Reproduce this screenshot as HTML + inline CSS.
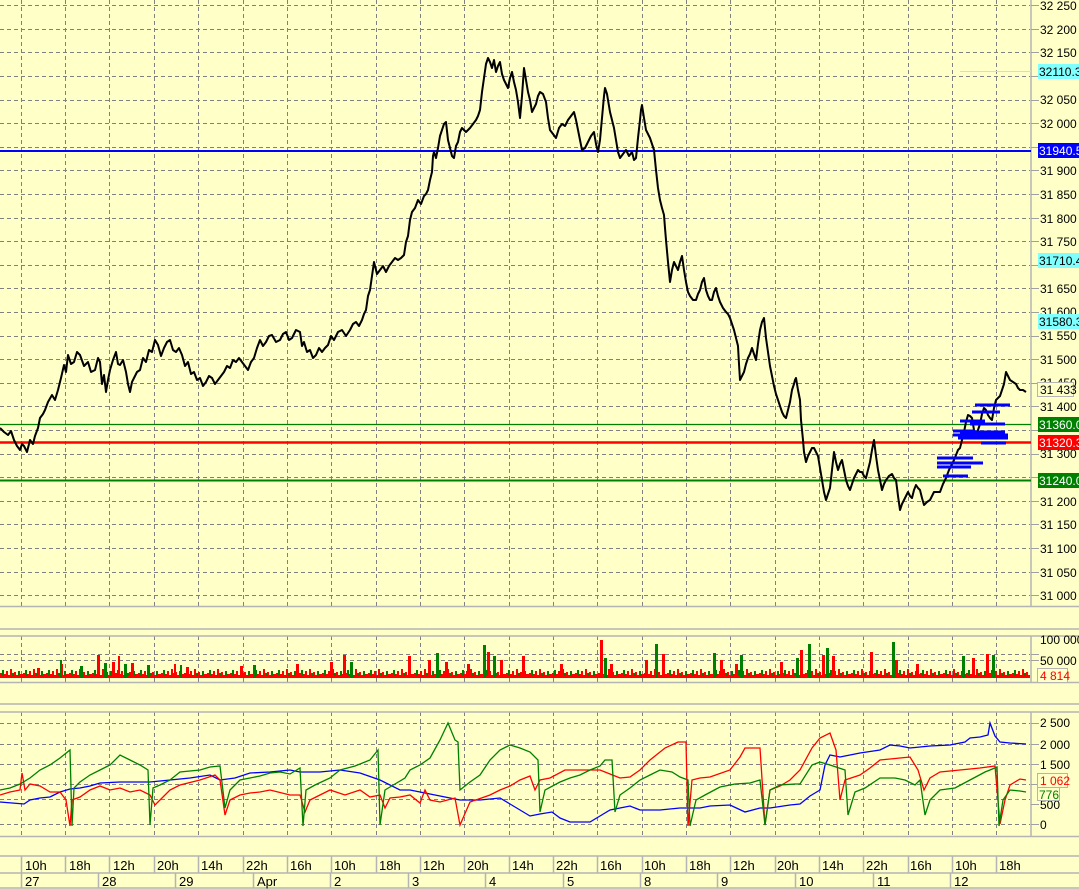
<!DOCTYPE html>
<html><head><meta charset="utf-8"><style>
html,body{margin:0;padding:0;background:#ffffc8;}
svg{display:block;font-family:"Liberation Sans",sans-serif;}
</style></head><body>
<svg width="1079" height="889" viewBox="0 0 1079 889" xmlns="http://www.w3.org/2000/svg">
<defs>
<pattern id="vp" x="0" y="660" width="23" height="18" patternUnits="userSpaceOnUse">
<rect x="0" y="13" width="2" height="5" fill="#f00"/><rect x="2" y="10" width="2" height="8" fill="#008000"/><rect x="4" y="14" width="2" height="4" fill="#f00"/><rect x="6" y="11" width="2" height="7" fill="#f00"/><rect x="8" y="15" width="2" height="3" fill="#008000"/><rect x="10" y="9" width="2" height="9" fill="#f00"/><rect x="12" y="13" width="2" height="5" fill="#008000"/><rect x="14" y="12" width="2" height="6" fill="#f00"/><rect x="16" y="15" width="2" height="3" fill="#f00"/><rect x="18" y="11" width="2" height="7" fill="#008000"/><rect x="20" y="14" width="3" height="4" fill="#f00"/>
</pattern>
</defs>
<rect width="1079" height="889" fill="#ffffc8"/>
<!-- vertical grid -->
<g stroke="#808080" stroke-dasharray="4,3" stroke-width="1">
<path d="M21.5 0V606M65.5 0V606M109.5 0V606M154.5 0V606M198.5 0V606M243.5 0V606M287.5 0V606M331.5 0V606M376.5 0V606M420.5 0V606M464.5 0V606M509.5 0V606M553.5 0V606M597.5 0V606M642.5 0V606M686.5 0V606M730.5 0V606M775.5 0V606M819.5 0V606M863.5 0V606M908.5 0V606M952.5 0V606M996.5 0V606"/>
<path d="M21.5 636V682M65.5 636V682M109.5 636V682M154.5 636V682M198.5 636V682M243.5 636V682M287.5 636V682M331.5 636V682M376.5 636V682M420.5 636V682M464.5 636V682M509.5 636V682M553.5 636V682M597.5 636V682M642.5 636V682M686.5 636V682M730.5 636V682M775.5 636V682M819.5 636V682M863.5 636V682M908.5 636V682M952.5 636V682M996.5 636V682"/>
<path d="M21.5 712V836M65.5 712V836M109.5 712V836M154.5 712V836M198.5 712V836M243.5 712V836M287.5 712V836M331.5 712V836M376.5 712V836M420.5 712V836M464.5 712V836M509.5 712V836M553.5 712V836M597.5 712V836M642.5 712V836M686.5 712V836M730.5 712V836M775.5 712V836M819.5 712V836M863.5 712V836M908.5 712V836M952.5 712V836M996.5 712V836"/>
<path d="M0 5.5H1030M0 29.5H1030M0 52.5H1030M0 76.5H1030M0 100.5H1030M0 123.5H1030M0 147.5H1030M0 170.5H1030M0 194.5H1030M0 218.5H1030M0 241.5H1030M0 265.5H1030M0 288.5H1030M0 312.5H1030M0 336.5H1030M0 359.5H1030M0 383.5H1030M0 406.5H1030M0 430.5H1030M0 454.5H1030M0 477.5H1030M0 501.5H1030M0 524.5H1030M0 548.5H1030M0 572.5H1030M0 595.5H1030"/>
<path d="M0 654.5H1030M0 660.5H1030"/>
<path d="M0 723.5H1030M0 744.5H1030M0 764.5H1030M0 784.5H1030M0 799.5H1030M0 824.5H1030"/>
</g>
<!-- panel separators -->
<g stroke="#b4b4b4" stroke-width="1.5">
<path d="M0 606.5H1079M0 629H1079M0 636H1079M0 682.5H1079M0 704H1079M0 712H1079M0 836.5H1079"/>
<path d="M1031 0V606M1031 636V682M1031 712V836"/>
</g>
<g stroke="#a0a0a0" stroke-width="1">
<path d="M1031 5.5h8M1031 29.5h8M1031 52.5h8M1031 76.5h8M1031 100.5h8M1031 123.5h8M1031 147.5h8M1031 170.5h8M1031 194.5h8M1031 218.5h8M1031 241.5h8M1031 265.5h8M1031 288.5h8M1031 312.5h8M1031 336.5h8M1031 359.5h8M1031 383.5h8M1031 406.5h8M1031 430.5h8M1031 454.5h8M1031 477.5h8M1031 501.5h8M1031 524.5h8M1031 548.5h8M1031 572.5h8M1031 595.5h8"/>
<path d="M1031 654.5h8M1031 660.5h8M1031 723.5h8M1031 744.5h8M1031 764.5h8M1031 784.5h8M1031 804.5h8M1031 824.5h8"/>
</g>
<!-- level lines -->
<path d="M960 71.5H1031" stroke="#80ffff" stroke-width="1"/>
<path d="M0 151H1031" stroke="#0000ff" stroke-width="2"/>
<path d="M0 424.5H1031" stroke="#008000" stroke-width="1.2"/>
<path d="M0 442.5H1031" stroke="#ff0000" stroke-width="2.5"/>
<path d="M0 480.5H1031" stroke="#008000" stroke-width="2"/>
<!-- price -->
<polyline fill="none" stroke="#000" stroke-width="2" stroke-linejoin="round" points="0,428 4,432 8,435 11,431 14,440 17,446 20,450 22,444 24,446 27,452 30,440 33,444 35,436 38,428 40,418 43,414 45,410 48,402 52,395 55,400 58,390 61,378 64,365 66,372 68,355 71,364 74,362 77,352 80,355 84,366 88,362 91,372 95,370 98,358 100,362 102,384 104,375 106,392 108,380 110,370 113,360 116,352 118,364 120,365 123,360 126,372 128,384 130,392 132,382 134,378 137,372 140,370 143,358 146,362 149,350 152,352 155,340 158,345 161,356 164,348 167,342 170,340 173,350 176,352 179,348 182,355 185,366 188,362 191,374 194,372 197,380 200,378 203,386 206,382 209,376 212,378 215,384 218,380 221,376 224,372 227,366 230,368 233,360 236,362 239,358 242,362 245,366 248,370 251,362 254,358 257,348 260,340 263,346 266,342 269,336 272,335 276,342 280,340 283,334 286,332 289,340 292,338 296,330 300,332 302,346 304,342 307,352 310,350 313,358 316,355 319,348 322,352 325,348 328,345 331,336 334,340 338,332 342,330 346,336 350,330 353,324 356,322 359,326 362,320 364,314 366,310 368,296 370,290 372,276 374,262 377,274 380,270 383,266 386,272 389,266 392,262 395,258 398,260 401,258 404,255 406,242 408,236 410,220 412,212 415,208 418,200 421,204 424,196 426,194 428,190 430,180 432,172 433,156 434,152 436,158 438,148 440,136 442,130 444,124 446,122 448,140 450,148 452,156 454,158 456,146 458,142 460,132 462,128 466,132 470,128 473,124 476,120 478,116 480,110 482,92 484,78 486,64 488,58 490,62 492,68 494,60 496,72 498,66 500,62 502,74 504,80 506,84 508,88 510,78 512,72 514,82 516,90 518,102 520,118 522,96 524,68 526,80 528,92 530,100 532,112 534,108 536,104 538,96 540,92 543,94 546,102 548,118 550,130 553,134 556,138 559,128 562,124 565,126 568,120 571,116 574,112 576,120 578,130 580,140 582,150 585,148 588,142 591,136 594,132 596,144 598,152 600,140 602,118 604,96 605,88 607,94 608,100 610,112 612,120 614,128 616,140 618,152 620,158 623,154 626,150 629,156 632,152 634,160 636,158 638,138 640,120 641,110 642,105 644,118 646,130 648,134 650,138 652,144 654,150 655,160 656,170 658,188 660,200 662,208 664,215 665,228 666,240 668,262 670,282 672,270 674,262 676,266 678,270 680,262 682,256 684,270 686,282 688,292 690,296 693,300 696,300 698,294 700,290 702,282 704,278 706,290 708,296 710,300 712,300 714,292 716,288 718,296 720,302 723,308 726,312 728,314 730,318 732,324 734,330 736,338 738,346 739,364 740,380 742,376 744,372 746,364 748,358 750,354 752,348 754,354 756,360 758,344 760,330 762,322 764,318 765,328 766,338 768,352 770,366 772,376 774,386 776,394 778,400 780,406 782,412 784,416 786,418 788,410 790,402 792,390 794,384 795,380 796,378 798,390 800,400 801,420 803,440 804,452 806,462 808,456 810,452 812,448 814,448 816,452 818,456 820,468 822,480 824,492 826,500 828,494 830,488 832,470 834,452 836,462 838,470 840,464 842,460 844,470 846,480 848,486 850,490 852,484 854,478 856,474 858,470 860,472 862,472 864,476 866,478 868,470 870,462 872,450 874,440 876,456 878,470 880,480 882,490 884,484 886,480 889,476 892,474 894,478 896,480 898,496 900,510 902,504 904,500 906,496 908,492 910,496 912,498 914,490 916,485 918,488 920,490 922,498 924,505 927,502 930,500 932,496 934,492 937,492 940,492 943,484 946,478 949,470 952,464 954,460 956,455 958,450 960,448 962,440 964,432 966,422 968,415 970,416 972,418 974,430 976,438 978,430 980,424 982,414 984,408 986,410 988,415 990,418 992,420 994,408 996,400 998,398 1000,396 1002,390 1004,384 1005,378 1006,372 1008,376 1010,380 1013,382 1016,384 1018,388 1020,390 1023,390 1026,392"/>
<!-- blue order marks -->
<g stroke="#0000ff" stroke-width="3">
<path d="M975 405H1010M972 412H1000M960 421H985M970 424H1005M953 431H975M960 432H1005M953 435H1008M958 438H1008M981 443H1006M937 458H973M937 463H983M937 467H971M943 476H968"/>
</g>
<!-- volume bars -->
<rect x="0" y="660" width="1030" height="18" fill="url(#vp)"/>
<path d="M0 676h1030v2H0z" fill="#f00"/>
<g fill="#ff0000">
<rect x="37" y="668" width="3" height="10"/><rect x="60" y="664" width="3" height="14"/><rect x="97" y="655" width="3" height="23"/><rect x="112" y="662" width="3" height="16"/><rect x="118" y="656" width="2" height="22"/><rect x="131" y="663" width="3" height="15"/><rect x="174" y="664" width="2" height="14"/><rect x="186" y="667" width="3" height="11"/><rect x="240" y="666" width="3" height="12"/><rect x="296" y="664" width="3" height="14"/><rect x="330" y="662" width="3" height="16"/><rect x="343" y="655" width="3" height="23"/><rect x="408" y="656" width="3" height="22"/><rect x="428" y="660" width="3" height="18"/><rect x="445" y="662" width="3" height="16"/><rect x="467" y="664" width="3" height="14"/><rect x="487" y="652" width="3" height="26"/><rect x="500" y="660" width="3" height="18"/><rect x="522" y="656" width="3" height="22"/><rect x="560" y="664" width="3" height="14"/><rect x="600" y="640" width="3" height="38"/><rect x="610" y="664" width="3" height="14"/><rect x="645" y="660" width="3" height="18"/><rect x="662" y="654" width="3" height="24"/><rect x="720" y="660" width="3" height="18"/><rect x="735" y="664" width="3" height="14"/><rect x="780" y="662" width="3" height="16"/><rect x="800" y="650" width="3" height="28"/><rect x="822" y="655" width="3" height="23"/><rect x="832" y="656" width="3" height="22"/><rect x="870" y="652" width="3" height="26"/><rect x="895" y="660" width="3" height="18"/><rect x="916" y="664" width="3" height="14"/><rect x="972" y="658" width="3" height="20"/><rect x="986" y="654" width="3" height="24"/></g>
<g fill="#008000">
<rect x="60" y="660" width="2" height="18"/><rect x="80" y="666" width="3" height="12"/><rect x="104" y="663" width="3" height="15"/><rect x="124" y="664" width="3" height="14"/><rect x="147" y="665" width="3" height="13"/><rect x="180" y="665" width="2" height="13"/><rect x="253" y="665" width="3" height="13"/><rect x="350" y="662" width="3" height="16"/><rect x="436" y="653" width="3" height="25"/><rect x="483" y="645" width="3" height="33"/><rect x="493" y="656" width="3" height="22"/><rect x="604" y="658" width="3" height="20"/><rect x="655" y="644" width="3" height="34"/><rect x="713" y="653" width="3" height="25"/><rect x="740" y="655" width="3" height="23"/><rect x="796" y="658" width="3" height="20"/><rect x="808" y="644" width="3" height="34"/><rect x="826" y="648" width="3" height="30"/><rect x="892" y="642" width="3" height="36"/><rect x="962" y="656" width="3" height="22"/><rect x="992" y="655" width="3" height="23"/></g>
<!-- indicator lines -->
<polyline fill="none" stroke="#0000ff" stroke-width="1.3" points="0,802 12,803 24,804 30,800 40,798 50,797 60,792 70,789 80,788 90,786 100,783 120,782 150,782 170,780 190,778 210,775 220,780 235,778 250,773 270,772 290,770 300,772 320,772 340,770 360,773 380,780 400,790 410,790 420,792 440,796 460,800 480,800 500,798 510,804 520,810 530,816 540,814 552,812 560,818 570,822 590,822 600,816 610,810 620,808 630,806 640,810 660,810 680,808 700,808 710,806 730,805 745,812 760,808 770,808 790,805 800,804 810,796 820,790 825,765 830,755 840,757 850,755 860,753 880,750 890,745 900,746 910,748 930,746 950,745 965,742 970,738 980,737 988,735 990,723 995,736 1000,742 1010,743 1026,744"/>
<polyline fill="none" stroke="#ff0000" stroke-width="1.3" points="0,795 10,792 20,790 22,773 25,790 30,784 40,786 50,792 60,792 66,800 70,826 72,800 80,797 90,790 100,786 110,790 120,788 130,792 140,790 150,795 155,805 160,800 170,790 180,785 200,780 215,775 220,780 225,815 230,800 240,795 250,793 260,792 270,790 290,795 300,795 305,812 310,800 320,795 330,790 345,795 360,790 370,797 380,795 385,808 390,798 400,797 410,795 420,803 425,790 430,800 440,802 455,798 460,825 470,802 490,795 500,790 510,786 520,780 530,776 535,790 540,780 550,778 565,770 580,770 600,770 610,774 620,778 630,777 640,770 650,760 665,748 678,742 686,742 688,826 692,780 700,778 710,777 730,770 740,757 745,748 760,748 765,825 770,790 780,786 790,780 800,770 812,748 820,738 830,733 836,750 840,800 845,780 860,775 870,768 880,760 900,758 910,757 918,770 924,790 930,778 940,772 960,770 980,768 995,766 1000,824 1005,800 1010,785 1020,779 1026,780"/>
<polyline fill="none" stroke="#008000" stroke-width="1.3" points="0,790 10,788 20,784 30,778 40,770 50,765 60,758 70,750 72,826 74,788 80,782 90,775 100,770 110,765 120,755 130,760 140,765 148,770 150,825 153,788 160,785 170,780 180,772 200,770 210,767 220,766 225,808 230,790 240,780 250,778 260,776 270,773 280,772 290,774 300,768 303,826 306,790 315,785 330,778 340,770 355,766 370,760 378,750 380,825 385,790 395,784 405,778 410,770 420,765 430,758 440,740 448,723 455,740 458,742 460,790 470,782 480,775 490,760 500,750 510,745 520,748 530,752 538,760 540,812 545,790 560,782 570,778 580,775 590,770 600,766 605,760 612,760 615,812 620,795 630,788 640,780 650,775 660,770 672,772 680,777 688,780 690,826 696,800 705,795 720,787 735,784 750,783 760,780 765,825 770,790 780,785 795,784 800,784 812,765 820,762 830,765 845,770 848,815 855,792 865,788 880,778 895,778 905,780 915,785 920,780 925,815 930,800 940,790 955,788 970,780 985,772 990,770 997,767 999,826 1003,800 1010,790 1020,791 1026,792"/>
<!-- axis labels -->
<g font-size="12" fill="#000">
<text x="1040" y="10">32 250</text><text x="1040" y="34">32 200</text><text x="1040" y="57">32 150</text><text x="1040" y="104">32 050</text><text x="1040" y="128">32 000</text><text x="1040" y="175">31 900</text><text x="1040" y="199">31 850</text><text x="1040" y="223">31 800</text><text x="1040" y="246">31 750</text><text x="1040" y="293">31 650</text><text x="1040" y="316">31 600</text><text x="1040" y="340">31 550</text><text x="1040" y="364">31 500</text><text x="1040" y="387">31 450</text><text x="1040" y="411">31 400</text><text x="1040" y="458">31 300</text><text x="1040" y="506">31 200</text><text x="1040" y="529">31 150</text><text x="1040" y="553">31 100</text><text x="1040" y="577">31 050</text><text x="1040" y="600">31 000</text>
<text x="1040" y="644">100 000</text><text x="1040" y="665">50 000</text>
<text x="1040" y="727">2 500</text><text x="1040" y="749">2 000</text><text x="1040" y="769">1 500</text><text x="1040" y="809">500</text><text x="1040" y="829">0</text>
</g>
<g font-size="12">
<rect x="1038" y="64" width="41" height="15" fill="#80ffff"/><text x="1039" y="76" fill="#000">32110.31</text>
<rect x="1038" y="143" width="41" height="15" fill="#0000ff"/><text x="1039" y="155" fill="#fff">31940.53</text>
<rect x="1038" y="253" width="41" height="15" fill="#80ffff"/><text x="1039" y="265" fill="#000">31710.43</text>
<rect x="1038" y="314" width="41" height="15" fill="#80ffff"/><text x="1039" y="326" fill="#000">31580.39</text>
<rect x="1037.5" y="382.5" width="36" height="14" fill="#ffffc8" stroke="#b4b4b4"/><text x="1040" y="394" fill="#000">31 433</text>
<rect x="1038" y="417" width="41" height="15" fill="#008000"/><text x="1039" y="429" fill="#fff">31360.00</text>
<rect x="1038" y="435" width="41" height="15" fill="#ff0000"/><text x="1039" y="447" fill="#fff">31320.33</text>
<rect x="1038" y="473" width="41" height="15" fill="#008000"/><text x="1039" y="485" fill="#fff">31240.05</text>
<rect x="1037.5" y="668.5" width="30" height="14" fill="#ffffc8" stroke="#b4b4b4"/><text x="1040" y="680" fill="#f00">4 814</text>
<rect x="1037.5" y="773.5" width="30" height="14" fill="#ffffc8" stroke="#b4b4b4"/><text x="1040" y="785" fill="#f00">1 062</text>
<rect x="1037.5" y="787.5" width="22" height="13" fill="#ffffc8" stroke="#b4b4b4"/><text x="1039" y="799" fill="#008000">776</text>
</g>
<!-- time axis -->
<g stroke="#b4b4b4" stroke-width="1.5" fill="none">
<path d="M0 856H1079M0 873H1079M0 888H1079"/>
<path d="M21.5 856V888M65.5 856V873M109.5 856V873M154.5 856V873M198.5 856V873M243.5 856V873M287.5 856V873M331.5 856V873M376.5 856V873M420.5 856V873M464.5 856V873M509.5 856V873M553.5 856V873M597.5 856V873M642.5 856V873M686.5 856V873M730.5 856V873M775.5 856V873M819.5 856V873M863.5 856V873M908.5 856V873M952.5 856V873M996.5 856V873"/>
<path d="M98.5 873V888M175.5 873V888M253.5 873V888M330.5 873V888M408.5 873V888M485.5 873V888M563.5 873V888M640.5 873V888M717.5 873V888M795.5 873V888M873.5 873V888M950.5 873V888"/>
</g>
<g font-size="13" fill="#000">
<text x="25" y="870">10h</text><text x="69" y="870">18h</text><text x="113" y="870">12h</text><text x="157" y="870">20h</text><text x="201" y="870">14h</text><text x="246" y="870">22h</text><text x="290" y="870">16h</text><text x="334" y="870">10h</text><text x="379" y="870">18h</text><text x="423" y="870">12h</text><text x="467" y="870">20h</text><text x="512" y="870">14h</text><text x="556" y="870">22h</text><text x="600" y="870">16h</text><text x="644" y="870">10h</text><text x="689" y="870">18h</text><text x="733" y="870">12h</text><text x="777" y="870">20h</text><text x="822" y="870">14h</text><text x="866" y="870">22h</text><text x="910" y="870">16h</text><text x="955" y="870">10h</text><text x="999" y="870">18h</text>
<text x="25" y="886">27</text><text x="102" y="886">28</text><text x="179" y="886">29</text><text x="257" y="886">Apr</text><text x="334" y="886">2</text><text x="412" y="886">3</text><text x="489" y="886">4</text><text x="567" y="886">5</text><text x="644" y="886">8</text><text x="721" y="886">9</text><text x="799" y="886">10</text><text x="877" y="886">11</text><text x="954" y="886">12</text>
</g>
</svg>
</body></html>
